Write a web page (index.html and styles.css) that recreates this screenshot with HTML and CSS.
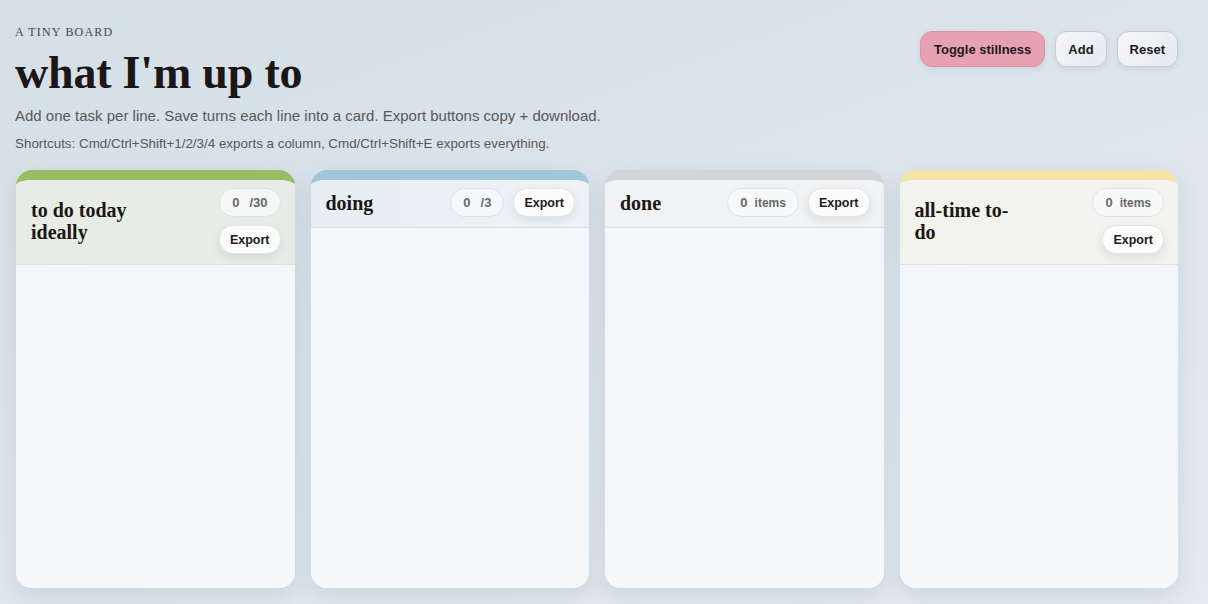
FILE: index.html
```html
<!DOCTYPE html>
<html lang="en">
<head>
    <meta charset="UTF-8">
    <meta name="viewport" content="width=device-width, initial-scale=1.0">
    <title>what I'm up to</title>
    <link rel="stylesheet" href="styles.css">
</head>
<body>
    <header class="top">
        <div class="intro">
            <p class="eyebrow">A tiny board</p>
            <h1>what I'm up to</h1>
            <p class="lede">Add one task per line. Save turns each line into a card. Export buttons copy + download.</p>
            <p class="hint">Shortcuts: Cmd/Ctrl+Shift+1/2/3/4 exports a column, Cmd/Ctrl+Shift+E exports everything.</p>
        </div>
        <div class="controls">
            <button class="btn btn-pink">Toggle stillness</button>
            <button class="btn">Add</button>
            <button class="btn">Reset</button>
        </div>
    </header>

    <main class="board">
        <section class="col col-today">
            <div class="col-head">
                <h2>to do today ideally</h2>
                <div class="col-actions stacked">
                    <span class="count"><b>0</b><b class="limit">/30</b></span>
                    <button class="export">Export</button>
                </div>
            </div>
            <div class="col-body"></div>
        </section>

        <section class="col col-doing">
            <div class="col-head">
                <h2>doing</h2>
                <div class="col-actions">
                    <span class="count"><b>0</b><b class="limit">/3</b></span>
                    <button class="export">Export</button>
                </div>
            </div>
            <div class="col-body"></div>
        </section>

        <section class="col col-done">
            <div class="col-head">
                <h2>done</h2>
                <div class="col-actions">
                    <span class="count"><b>0</b><b class="unit">items</b></span>
                    <button class="export">Export</button>
                </div>
            </div>
            <div class="col-body"></div>
        </section>

        <section class="col col-all">
            <div class="col-head">
                <h2 class="narrow">all-time to-do</h2>
                <div class="col-actions stacked">
                    <span class="count"><b>0</b><b class="unit">items</b></span>
                    <button class="export">Export</button>
                </div>
            </div>
            <div class="col-body"></div>
        </section>
    </main>
</body>
</html>
```

FILE: styles.css
```css
html, body {
    height: 100%;
}
body {
    margin: 0;
    padding: 16px 30px 16px 15px;
    box-sizing: border-box;
    font-family: "Liberation Sans", Arial, sans-serif;
    color: #1c1817;
    background: linear-gradient(160deg, #d3dee6 0%, #dde5ec 45%, #e4eaf0 100%);
    display: flex;
    flex-direction: column;
    overflow: hidden;
}
.top {
    display: flex;
    justify-content: space-between;
    align-items: flex-start;
}
.eyebrow {
    margin: 9px 0 0;
    font-family: "Liberation Serif", serif;
    font-size: 12px;
    line-height: 14px;
    letter-spacing: 1.2px;
    text-transform: uppercase;
    color: #4a4644;
}
h1 {
    margin: 8px 0 0;
    font-family: "Liberation Serif", Georgia, serif;
    font-size: 46px;
    font-weight: bold;
    line-height: 52px;
    letter-spacing: -0.2px;
    color: #1c1614;
}
.lede {
    margin: 8px 0 0;
    font-size: 15px;
    line-height: 17px;
    color: #5a5856;
}
.hint {
    margin: 12px 0 0;
    font-size: 13.4px;
    line-height: 15px;
    color: #5a5856;
}
.controls {
    display: flex;
    gap: 10px;
    margin-top: 15px;
}
.btn {
    height: 36px;
    padding: 0 12px;
    border-radius: 12px;
    border: 1px solid #c9cdd1;
    background: linear-gradient(135deg, #f6f8fa, #e4e9ee);
    font-family: "Liberation Sans", Arial, sans-serif;
    font-size: 13px;
    font-weight: bold;
    color: #1d1a1a;
    box-shadow: 0 2px 6px rgba(60, 80, 100, 0.1);
    cursor: pointer;
}
.btn-pink {
    background: #e8a1b2;
    border-color: #dc93a4;
    padding: 0 13px;
}

.board {
    flex: 1;
    display: grid;
    grid-template-columns: repeat(4, 1fr);
    gap: 16px;
    margin-top: 19px;
    margin-left: 1px;
}
.col {
    display: flex;
    flex-direction: column;
    border-top: 10px solid #d3d3d3;
    border-radius: 16px;
    background: #f4f7fa;
    overflow: hidden;
    box-shadow: 0 8px 22px rgba(90, 110, 130, 0.16);
}
.col-today { border-top-color: #98bd64; }
.col-doing { border-top-color: #a0c6d9; }
.col-done { border-top-color: #d3d4d5; }
.col-all { border-top-color: #f4e4a5; }

.col-head {
    display: flex;
    align-items: center;
    justify-content: space-between;
    gap: 8px;
    padding: 8px 14px 10px 15px;
    border-bottom: 1px solid #dde1e5;
}
.col-today .col-head { background: #e7ede6; }
.col-doing .col-head { background: linear-gradient(90deg, #e6eef4, #eef2f6); }
.col-done .col-head { background: #f0f2f4; }
.col-all .col-head { background: #f2f2ef; }

.col-head h2 {
    margin: 0;
    max-width: 110px;
    font-family: "Liberation Serif", Georgia, serif;
    font-size: 20px;
    font-weight: bold;
    line-height: 22px;
    color: #1c1614;
}
.col-head h2.narrow {
    max-width: 104px;
}
.col-actions {
    display: flex;
    align-items: center;
    gap: 9px;
}
.col-actions.stacked {
    flex-direction: column;
    align-items: flex-end;
    gap: 8px;
}
.count {
    display: flex;
    gap: 7px;
    height: 29px;
    box-sizing: border-box;
    align-items: center;
    padding: 0 12px;
    border: 1px solid #dfe2e5;
    border-radius: 15px;
    background: rgba(250, 251, 252, 0.7);
    font-size: 13px;
    color: #6a6866;
}
.count .limit {
    margin-left: 3px;
}
.count .unit {
    font-size: 12px;
}
.export {
    height: 29px;
    padding: 0 10px;
    border: 1px solid #e3e5e7;
    border-radius: 14px;
    background: #fcfcfd;
    font-family: "Liberation Sans", Arial, sans-serif;
    font-size: 12.5px;
    font-weight: bold;
    color: #1d1a1a;
    box-shadow: 0 4px 10px rgba(60, 80, 100, 0.1);
    cursor: pointer;
}
.col-body {
    flex: 1;
    background: linear-gradient(170deg, #f4f7fa, #f6f8fa);
}
```
